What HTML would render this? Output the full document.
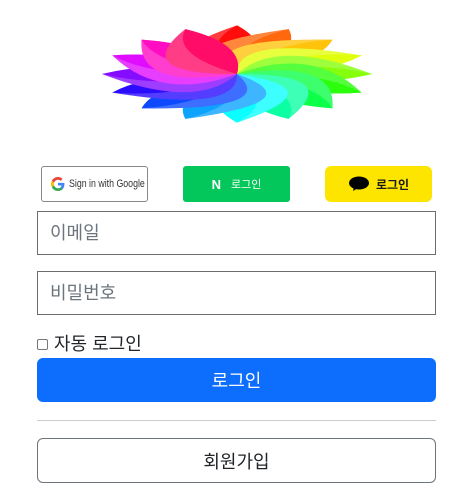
<!DOCTYPE html>
<html><head><meta charset="utf-8"><style>
*{box-sizing:border-box}
body{margin:0;width:459px;height:502px;background:#fff;font-family:"Liberation Sans","Noto Sans CJK KR",sans-serif;position:relative;overflow:hidden;color:#212529}
.abs{position:absolute}
.inp{left:37px;width:399px;height:44px;border:1px solid #6c6c6c;font-size:18px;color:#6c757d;padding:10px 12px;line-height:22px}
.btn{display:flex;align-items:center;justify-content:center;white-space:nowrap}
</style></head><body>
<svg class="abs" style="left:100px;top:24px" width="275" height="100" viewBox="-137 -50 275 100">
<g transform="scale(1,0.36)" id="f"></g>
</svg>
<div class="abs btn" style="left:41px;top:166px;width:107px;height:36px;border:1px solid #888;border-radius:3px;color:#333;gap:4px">
<svg width="14" height="14" viewBox="0 0 48 48"><path fill="#EA4335" d="M24 9.5c3.5 0 6.6 1.2 9.1 3.6l6.8-6.8C35.8 2.4 30.3 0 24 0 14.6 0 6.6 5.4 2.7 13.3l7.9 6.2C12.5 13.6 17.8 9.5 24 9.5z"/><path fill="#4285F4" d="M46.1 24.5c0-1.6-.1-3.1-.4-4.5H24v9h12.4c-.5 2.9-2.2 5.4-4.7 7.1l7.6 5.9c4.4-4.1 6.8-10.1 6.8-17.5z"/><path fill="#FBBC05" d="M10.5 28.6c-.5-1.5-.8-3-.8-4.6s.3-3.1.8-4.6l-7.9-6.2C1 16.5 0 20.1 0 24s1 7.5 2.7 10.7l7.8-6.1z"/><path fill="#34A853" d="M24 48c6.5 0 11.9-2.1 15.9-5.8l-7.6-5.9c-2.1 1.4-4.9 2.3-8.3 2.3-6.2 0-11.5-4.2-13.4-9.9l-7.9 6.1C6.6 42.6 14.6 48 24 48z"/></svg><span style="font-size:11px;display:inline-block;transform:scaleX(0.8);transform-origin:left;width:70px">Sign in with Google</span></div>
<div class="abs btn" style="left:183px;top:166px;width:107px;height:36px;background:#03c75a;border-radius:3px;color:#fff;font-size:11px;gap:10px"><b style="font-size:13px">N</b>로그인</div>
<div class="abs btn" style="left:325px;top:166px;width:107px;height:36px;background:#fee500;border-radius:6px;color:#191919;font-size:12px;font-weight:bold;gap:6px"><svg width="22" height="16" viewBox="0 0 22 16"><ellipse cx="11" cy="7" rx="10" ry="6.5" fill="#000"/><path d="M6 11 L5 15 L10 12z" fill="#000"/></svg>로그인</div>
<div class="abs inp" style="top:211px">이메일</div>
<div class="abs inp" style="top:271px">비밀번호</div>
<div class="abs" style="left:37px;top:333px;font-size:18px;display:flex;align-items:center;gap:6px;line-height:22px"><span style="width:11px;height:11px;border:1px solid #777;border-radius:2px;display:inline-block"></span>자동 로그인</div>
<div class="abs btn" style="left:37px;top:358px;width:399px;height:44px;background:#0d6efd;border-radius:6px;color:#fff;font-size:18px">로그인</div>
<div class="abs" style="left:37px;top:420px;width:399px;height:1px;background:#ccc"></div>
<div class="abs btn" style="left:37px;top:438px;width:399px;height:45px;border:1px solid #6c757d;border-radius:6px;font-size:18px;color:#212529">회원가입</div>
<script>
var g=document.getElementById('f'),s='';
for(var i=0;i<16;i++){var a=-90+i*22.5,h=(i*22.5)%360;var r=135;
s+='<path transform="rotate('+a+')" d="M0,0 Q'+r*0.3+','+(-r*0.75)+' '+r+',0 Q'+r*0.55+','+(r*0.3)+' 0,0z" fill="hsl('+h+',100%,62%)"/>';
s+='<path transform="rotate('+a+')" d="M0,0 Q'+r*0.55+','+(-r*0.3)+' '+r+',0 Q'+r*0.55+','+(r*0.3)+' 0,0z" fill="hsl('+h+',100%,50%)" opacity="0.8"/>';}
g.innerHTML=s;
</script>
</body></html>
